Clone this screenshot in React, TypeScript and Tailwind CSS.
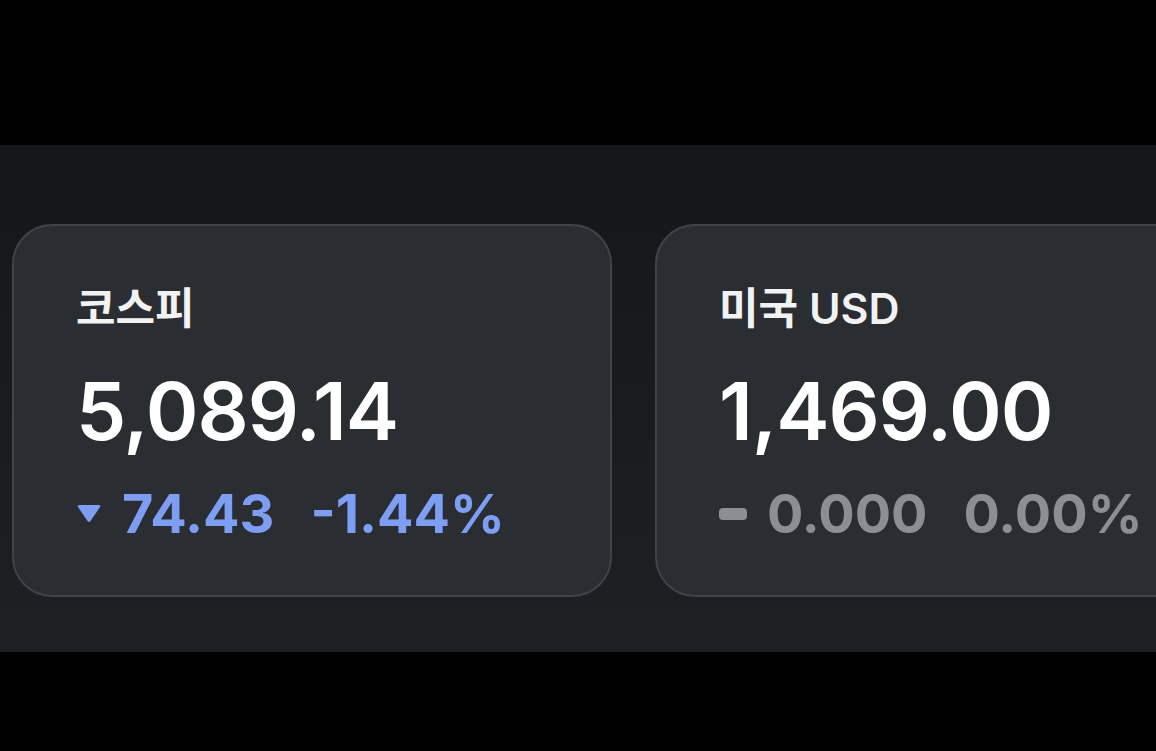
import React from "react";

type Quote = {
  name: string;
  value: string;
  change: string;
  rate: string;
  dir: "down" | "flat";
};

const quotes: Quote[] = [
  { name: "코스피", value: "5,089.14", change: "74.43", rate: "-1.44%", dir: "down" },
  { name: "미국 USD", value: "1,469.00", change: "0.000", rate: "0.00%", dir: "flat" },
];

function QuoteCard({ q }: { q: Quote }) {
  const color = q.dir === "down" ? "text-[#7d9ef2]" : "text-[#8d8e93]";
  return (
    <div className="w-[600px] h-[373px] shrink-0 rounded-[40px] border-2 border-[#414348] bg-[#2a2d32] pl-[62px] pt-[52px]">
      <div className="text-[43px] font-semibold leading-[60px] text-[#f2f2f3]">{q.name}</div>
      <div className="mt-[33px] text-[80px] font-semibold leading-[80px] text-white tracking-[-1px]">{q.value}</div>
      <div className={`mt-[35px] flex items-center text-[54px] font-bold leading-[56px] ${color}`}>
        {q.dir === "down" ? (
          <svg width="26" height="20" viewBox="0 0 26 20" className="mr-[20px]">
            <path d="M2 3 Q1 1 3.5 1 H22.5 Q25 1 24 3 L14.5 17 Q13 19 11.5 17 Z" fill="#7d9ef2" />
          </svg>
        ) : (
          <span className="mr-[20px] inline-block h-[12px] w-[28px] rounded-[4px] bg-[#8d8e93]" />
        )}
        <span>{q.change}</span>
        <span className="ml-[36px]">{q.rate}</span>
      </div>
    </div>
  );
}

export default function App() {
  return (
    <div
      className="w-[1156px] h-[751px] overflow-hidden bg-black flex flex-col"
      style={{ fontFamily: "Inter, 'Noto Sans CJK KR', sans-serif" }}
    >
      <div className="h-[145px] shrink-0" />
      <div className="h-[507px] shrink-0 bg-gradient-to-b from-[#151618] to-[#1f2023] pl-[12px] pt-[79px] flex gap-[43px]">
        {quotes.map((q) => (
          <QuoteCard key={q.name} q={q} />
        ))}
      </div>
    </div>
  );
}
